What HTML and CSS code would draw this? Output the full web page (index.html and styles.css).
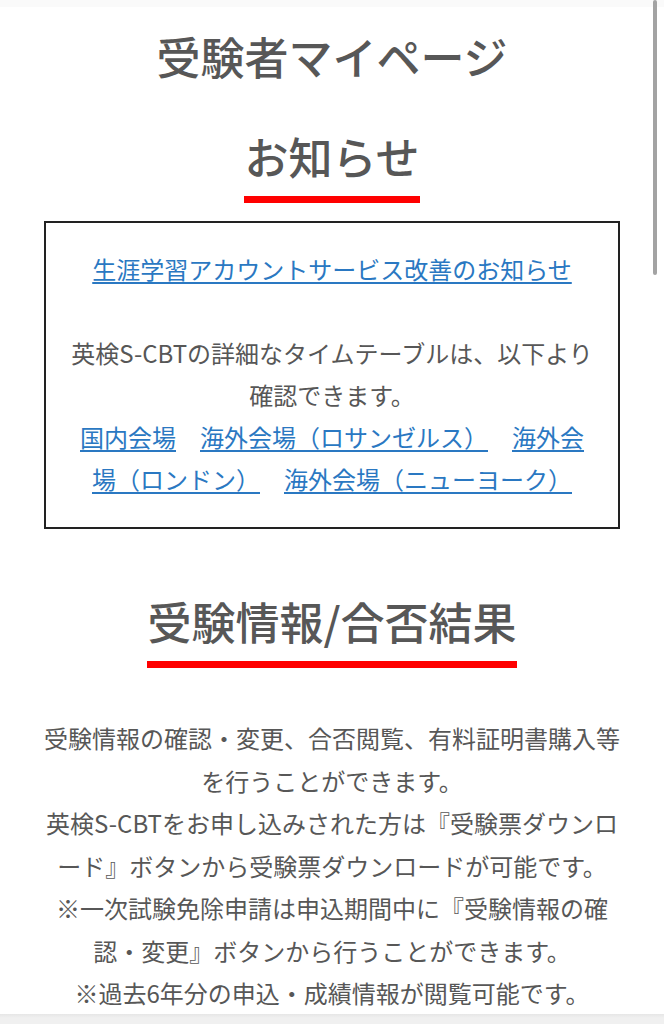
FILE: index.html
```html
<!DOCTYPE html>
<html lang="ja">
<head>
<meta charset="utf-8">
<title>受験者マイページ</title>
<link rel="stylesheet" href="styles.css">
</head>
<body>
<div class="page">
  <h1 class="page-title">受験者マイページ</h1>

  <section class="section">
    <h2 class="section-title"><span class="section-title-text">お知らせ</span></h2>
    <div class="notice-box">
      <p class="notice-link-line"><a class="link" href="#">生涯学習アカウントサービス改善のお知らせ</a></p>
      <p class="notice-text">英検S-CBTの詳細なタイムテーブルは、以下より<br>確認できます。<br><a class="link" href="#">国内会場</a>　<a class="link" href="#">海外会場（ロサンゼルス）</a>　<a class="link" href="#">海外会場（ロンドン）</a>　<a class="link" href="#">海外会場（ニューヨーク）</a></p>
    </div>
  </section>

  <section class="section section-exam">
    <h2 class="section-title"><span class="section-title-text">受験情報/合否結果</span></h2>
    <p class="exam-text">受験情報の確認・変更、合否閲覧、有料証明書購入等を行うことができます。<br>英検S-CBTをお申し込みされた方は『受験票ダウンロード』ボタンから受験票ダウンロードが可能です。<br>※一次試験免除申請は申込期間中に『受験情報の確認・変更』ボタンから行うことができます。<br>※過去6年分の申込・成績情報が閲覧可能です。</p>
  </section>
</div>

<div class="top-edge"></div>
<div class="scroll-thumb"></div>
<div class="bottom-bar"></div>
</body>
</html>
```

FILE: styles.css
```css
html {
  scrollbar-width: none;
  background: #ffffff;
}
html::-webkit-scrollbar {
  display: none;
}
body {
  margin: 0;
  font-family: "Noto Sans CJK JP", "Noto Sans", sans-serif;
  color: #575757;
  background: #ffffff;
  text-spacing-trim: space-all;
}
.page {
  padding: 0 44px;
}
.page-title {
  margin: 23px 0 0;
  font-size: 44px;
  line-height: 66px;
  font-weight: 500;
  text-align: center;
  color: #575757;
}
.section-title {
  margin: 34px 0 0;
  font-size: 44px;
  line-height: 66px;
  font-weight: 500;
  text-align: center;
  color: #575757;
}
.section-title-text {
  display: inline-block;
  padding-bottom: 7px;
  border-bottom: 7px solid #ff0000;
}
.notice-box {
  margin-top: 18px;
  border: 2px solid #222222;
  padding: 25px 24px 27px;
  text-align: center;
  font-size: 24px;
  line-height: 42px;
}
.notice-link-line {
  margin: 0 0 42px;
}
.notice-text {
  margin: 0;
}
.link {
  color: #2a78c2;
  text-decoration: underline;
  text-underline-offset: 3px;
  text-decoration-thickness: 1.5px;
}
.section-exam .section-title {
  margin-top: 59px;
}
.exam-text {
  margin: 49px -4px 0;
  font-size: 24px;
  line-height: 42.5px;
  text-align: center;
}
.top-edge {
  position: fixed;
  top: 0;
  left: 0;
  right: 0;
  height: 7px;
  background: #fafafa;
}
.scroll-thumb {
  position: fixed;
  top: 0;
  right: 7px;
  width: 4px;
  height: 275px;
  border-radius: 2px;
  background: #a3a3a3;
}
.bottom-bar {
  position: fixed;
  left: 0;
  right: 0;
  bottom: 0;
  height: 10px;
  background: linear-gradient(#e6e6e6, #f0f0f0 40%, #f0f0f0);
}
```
